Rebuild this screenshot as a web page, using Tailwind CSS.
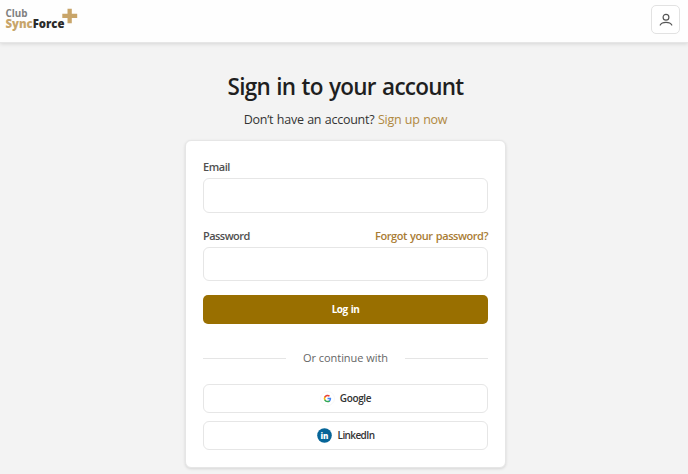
<!DOCTYPE html>
<html lang="en">

<head>
    <meta charset="UTF-8">
    <meta name="viewport" content="width=device-width, initial-scale=1.0">
    <title>Sign in - Club SyncForce</title>
    <script src="https://cdn.jsdelivr.net/npm/@tailwindcss/browser@4"></script>
</head>

<body class="bg-[#f3f3f3] font-['Open_Sans',sans-serif] text-[#1f1f1f] h-[474px] overflow-hidden">

    <header class="h-[43px] bg-[#fefefe] border-b border-[#e6e6e6] shadow-[0_1px_4px_rgba(0,0,0,0.12)] flex justify-between items-start pl-[5px] pr-2 pt-[5px]">
        <a href="#" aria-label="Club SyncForce">
            <svg class="block" width="74" height="30" viewBox="0 0 74 30" font-family="Open Sans, sans-serif" font-weight="700">
                <text x="0.5" y="11.5" font-size="10.5" fill="#808080" textLength="22" lengthAdjust="spacingAndGlyphs">Club</text>
                <text x="0.5" y="23" font-size="12.5" font-weight="800" textLength="59" lengthAdjust="spacingAndGlyphs"><tspan fill="#c8a56a">Sync</tspan><tspan fill="#2b2b2b">Force</tspan></text>
                <path d="M62.5 3.7h4.3v5.1h5.4v4.3h-5.4v5.1h-4.3v-5.1h-5.2V8.8h5.2z" fill="#c8a56a" />
            </svg>
        </a>
        <button class="w-[29px] h-[29px] bg-white border border-[#e2e2e2] rounded-[5px] flex items-center justify-center" aria-label="Account">
            <svg width="14" height="14" viewBox="0 0 14 14" fill="none" stroke="#555" stroke-width="1.2" stroke-linecap="round">
                <circle cx="7" cy="4.2" r="2.9" />
                <path d="M1.2 12c1-1.9 3.1-2.7 5.8-2.7s4.8.8 5.8 2.7" />
            </svg>
        </button>
    </header>

    <main class="w-[321px] ml-[185px] pt-7">
        <h1 class="text-[22.5px] leading-8 font-semibold text-center whitespace-nowrap tracking-[-0.75px] [word-spacing:1.2px]">Sign in to your account</h1>
        <p class="mt-[7px] text-[12.5px] leading-5 text-center whitespace-nowrap tracking-[-0.25px] [word-spacing:0.5px] text-[#333]">Don’t have an account? <a href="#" class="text-[#b08840]">Sign up now</a></p>

        <div class="mt-[10px] h-[328px] bg-white border border-[#e6e6e6] rounded-md shadow-[0_1px_3px_rgba(0,0,0,0.12)] px-[17px] pt-[18px]">
            <form>
                <label for="email" class="block h-[19px] text-[11px] leading-4 font-semibold tracking-[-0.45px] text-[#505050]">Email</label>
                <input type="email" id="email" class="block w-full h-[35px] border border-[#e6e6e6] rounded-md">

                <div class="mt-[15px] h-[19px] flex justify-between text-[11px] leading-4 font-semibold">
                    <label for="password" class="tracking-[-0.55px] text-[#505050]">Password</label>
                    <a href="#" class="tracking-[-0.45px] [word-spacing:0.8px] text-[#a97c34]">Forgot your password?</a>
                </div>
                <input type="password" id="password" class="block w-full h-[34px] border border-[#e6e6e6] rounded-md">

                <button type="submit" class="mt-[14px] block w-full h-[29px] bg-[#996f00] rounded-[5px] text-white text-[10px] font-bold tracking-[-0.5px] [word-spacing:1px]">Log in</button>
            </form>

            <div class="mt-[26px] h-4 flex items-center gap-[17px] text-[11px] text-[#666]">
                <div class="h-px grow bg-[#e5e5e5]"></div>
                <span class="tracking-[-0.05px]">Or continue with</span>
                <div class="h-px grow bg-[#e5e5e5]"></div>
            </div>

            <div class="mt-[18px] flex flex-col gap-2 text-[10px] font-semibold tracking-[-0.35px] text-[#333]">
                <button class="h-[29px] border border-[#e6e6e6] rounded-md flex items-center justify-center gap-[5px]">
                    <svg width="15" height="15" viewBox="0 0 15 15">
                        <circle cx="7.5" cy="7.5" r="7" fill="#fff" stroke="#f3f3f3" stroke-width=".7" />
                        <g transform="translate(3.7 3.7) scale(.317)">
                            <path fill="#4285f4" d="M23.5 12.3c0-.8-.1-1.6-.2-2.3H12v4.5h6.5a5.5 5.5 0 0 1-2.4 3.6v3H20c2.2-2.1 3.5-5.2 3.5-8.8z" />
                            <path fill="#34a853" d="M12 24c3.2 0 6-1.1 8-2.9l-3.9-3a7.2 7.2 0 0 1-10.8-3.8h-4v3.1A12 12 0 0 0 12 24z" />
                            <path fill="#fbbc05" d="M5.3 14.3a7.2 7.2 0 0 1 0-4.6V6.6h-4a12 12 0 0 0 0 10.8z" />
                            <path fill="#ea4335" d="M12 4.8c1.8 0 3.3.6 4.6 1.8L20 3.2A12 12 0 0 0 1.3 6.6l4 3.1A7.2 7.2 0 0 1 12 4.8z" />
                        </g>
                    </svg>
                    Google
                </button>
                <button class="h-[29px] border border-[#e6e6e6] rounded-md flex items-center justify-center gap-[6px] tracking-[-0.6px]">
                    <svg width="15" height="15" viewBox="0 0 15 15">
                        <circle cx="7.5" cy="7.5" r="7.3" fill="#066598" />
                        <text x="3.5" y="10.7" font-size="9.5" font-weight="800" letter-spacing="0" fill="#fff" textLength="8" lengthAdjust="spacingAndGlyphs">in</text>
                    </svg>
                    LinkedIn
                </button>
            </div>
        </div>
    </main>

</body>

</html>
